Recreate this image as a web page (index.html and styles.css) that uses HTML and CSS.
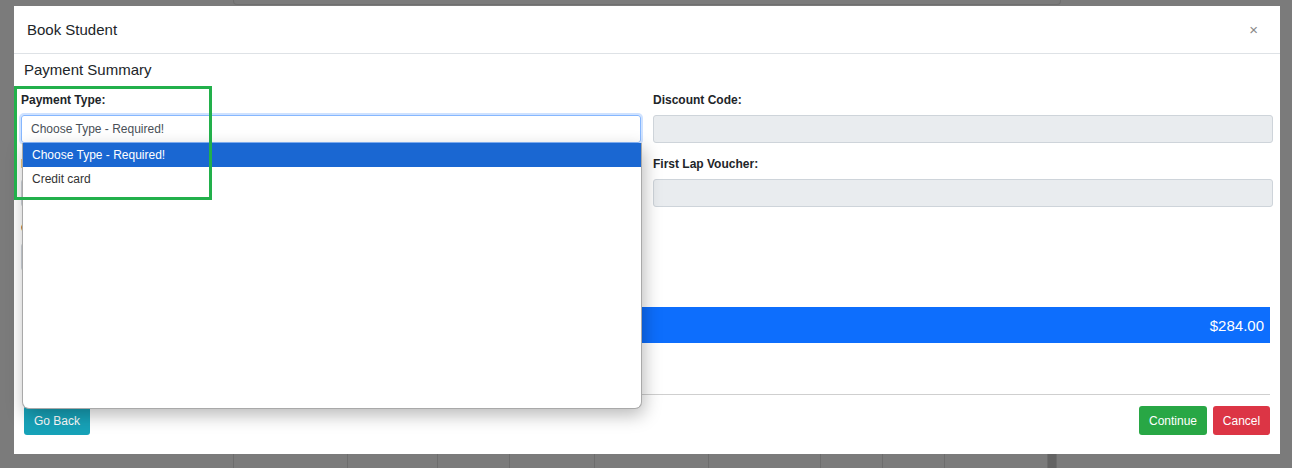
FILE: index.html
```html
<!DOCTYPE html>
<html lang="en">
  <head>
    <meta charset="UTF-8" />
    <meta name="viewport" content="width=device-width, initial-scale=1.0" />
    <title>Book Student</title>
    <link rel="stylesheet" href="styles.css">
  </head>
  <body>
    <div class="page">
      <div class="page-card"></div>
      <div class="page-table">
        <span class="cell" style="width:113px"></span>
        <span class="cell" style="width:89px"></span>
        <span class="cell" style="width:71px"></span>
        <span class="cell" style="width:84px"></span>
        <span class="cell" style="width:113px"></span>
        <span class="cell" style="width:111px"></span>
        <span class="cell" style="width:61px"></span>
        <span class="cell" style="width:61px"></span>
        <span class="cell" style="width:102px"></span>
        <span class="cell scroll" style="width:8px"></span>
        <span class="cell" style="width:2px"></span>
      </div>
    </div>

    <div class="modal">
      <div class="modal-header">
        <h5 class="modal-title">Book Student</h5>
        <span class="close">&times;</span>
      </div>
      <div class="modal-body">
        <div class="summary-title">Payment Summary</div>
        <div class="form-row">
          <div class="form-col">
            <label>Payment Type:</label>
            <div class="select focused">Choose Type - Required!</div>
          </div>
          <div class="form-col">
            <label>Discount Code:</label>
            <div class="input disabled"></div>
          </div>
        </div>
        <div class="form-row">
          <div class="form-col">
            <label>Pay In Full:</label>
            <div class="input"></div>
          </div>
          <div class="form-col">
            <label>First Lap Voucher:</label>
            <div class="input disabled"></div>
          </div>
        </div>
        <div class="form-row">
          <div class="form-col">
            <label>Comments:</label>
            <div class="input"></div>
          </div>
        </div>
        <div class="total-bar">
          <span>Total Due</span>
          <span>$284.00</span>
        </div>
      </div>
      <div class="modal-footer">
        <button class="btn btn-info">Go Back</button>
        <div class="footer-right">
          <button class="btn btn-success">Continue</button>
          <button class="btn btn-danger">Cancel</button>
        </div>
      </div>

      <ul class="dropdown-list">
        <li class="selected">Choose Type - Required!</li>
        <li>Credit card</li>
      </ul>
      <div class="highlight-box"></div>
    </div>
  </body>
</html>
```

FILE: styles.css
```css
html,
body {
  margin: 0;
  height: 100%;
}
body {
  background-color: #7b7b7b;
  font-family: "Liberation Sans", Arial, sans-serif;
  color: #212529;
  overflow: hidden;
}

/* dimmed page behind the modal */
.page {
  height: 468px;
  display: flex;
  flex-direction: column;
  justify-content: space-between;
}
.page-card {
  margin-left: 233px;
  width: 826px;
  height: 4px;
  border: 1px solid #6f6f6f;
  border-top: none;
  border-radius: 0 0 4px 4px;
}
.page-table {
  margin-left: 233px;
  height: 14px;
  display: flex;
}
.page-table .cell {
  border-left: 1px solid #6d6d6d;
  height: 14px;
}
.page-table .scroll {
  background-color: #636363;
}

/* modal */
.modal {
  position: fixed;
  top: 6px;
  left: 14px;
  width: 1266px;
  height: 448px;
  background-color: #ffffff;
  display: flex;
  flex-direction: column;
}
.modal-header {
  height: 47px;
  padding: 0 22px 0 13px;
  border-bottom: 1px solid #dee2e6;
  display: flex;
  align-items: center;
  justify-content: space-between;
}
.modal-title {
  margin: 0;
  font-size: 15px;
  font-weight: normal;
}
.close {
  color: #888;
  font-size: 15px;
}
.modal-body {
  padding: 7px 7px 0 7px;
}
.summary-title {
  font-size: 15px;
  line-height: 18px;
  padding-left: 3px;
}
.form-row {
  display: flex;
  gap: 12px;
  margin-top: 14px;
}
.form-col {
  width: 620px;
}
label {
  display: block;
  font-size: 12px;
  line-height: 14px;
  font-weight: bold;
  margin-bottom: 8px;
}
.select,
.input {
  box-sizing: border-box;
  height: 28px;
  border: 1px solid #ced4da;
  border-radius: 3px;
  font-size: 12px;
  line-height: 26px;
  padding-left: 9px;
  color: #495057;
}
.select.focused {
  border-color: #86b7fe;
  box-shadow: 0 0 0 2px rgba(13, 110, 253, 0.2);
}
.input.disabled {
  background-color: #e9ecef;
}
.total-bar {
  margin: 36px 3px 0 3px;
  height: 36px;
  background-color: #0d6efd;
  color: #ffffff;
  font-size: 15px;
  display: flex;
  align-items: center;
  justify-content: space-between;
  padding: 0 6px 0 10px;
}
.modal-footer {
  margin: 51px 10px 0 10px;
  padding-top: 11px;
  border-top: 1px solid #cfcfcf;
  display: flex;
  justify-content: space-between;
}
.footer-right {
  display: flex;
  gap: 6px;
}
.btn {
  height: 29px;
  border: none;
  border-radius: 3px;
  color: #ffffff;
  font-family: "Liberation Sans", Arial, sans-serif;
  font-size: 12px;
  padding: 0;
  white-space: nowrap;
}
.btn-info {
  background-color: #17a2b8;
  width: 66px;
}
.btn-success {
  background-color: #28a745;
  width: 68px;
}
.btn-danger {
  background-color: #dc3545;
  width: 57px;
}

/* open select dropdown */
.dropdown-list {
  position: absolute;
  top: 137px;
  left: 8px;
  width: 618px;
  height: 265px;
  margin: 0;
  padding: 0;
  list-style: none;
  background-color: #ffffff;
  border: 1px solid #a9a9a9;
  border-top: none;
  border-radius: 0 0 7px 7px;
  box-shadow: 2px 6px 18px rgba(0, 0, 0, 0.28);
}
.dropdown-list li {
  height: 24px;
  line-height: 25px;
  font-size: 12px;
  padding-left: 9px;
  color: #333;
}
.dropdown-list li.selected {
  background-color: #1a67d2;
  color: #ffffff;
}

/* annotation */
.highlight-box {
  position: absolute;
  top: 80px;
  left: 0;
  width: 192px;
  height: 108px;
  border: 3px solid #22b04b;
}
```
